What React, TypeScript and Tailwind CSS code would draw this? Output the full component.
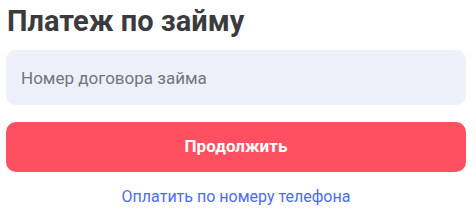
import React, { useState } from "react";

const App: React.FC = () => {
  const [contract, setContract] = useState("");

  return (
    <div
      className="w-[475px] h-[211px] bg-white pl-[6px] pr-[9px] pt-[2px]"
      style={{ fontFamily: "Roboto, 'Noto Sans', sans-serif" }}
    >
      {/* Заголовок */}
      <h1 className="pl-[1px] text-[29px] leading-[38px] font-bold text-[#3b3b3d]">
        Платеж по займу
      </h1>

      {/* Поле договора */}
      <input
        value={contract}
        onChange={(e) => setContract(e.target.value)}
        placeholder="Номер договора займа"
        className="mt-[10px] block w-full h-[55px] rounded-[10px] bg-[#edf0f8] px-[15px] text-[17px] text-[#2b2b2b] placeholder:text-[#72757d] outline-none"
      />

      {/* Кнопка */}
      <button className="mt-[17px] block w-full h-[50px] rounded-[10px] bg-[#ff5061] text-white text-[17px] font-bold">
        Продолжить
      </button>

      <div className="mt-[13px] text-center">
        <a href="#" className="text-[16px] text-[#4b6cf3]">
          Оплатить по номеру телефона
        </a>
      </div>
    </div>
  );
};

export default App;
